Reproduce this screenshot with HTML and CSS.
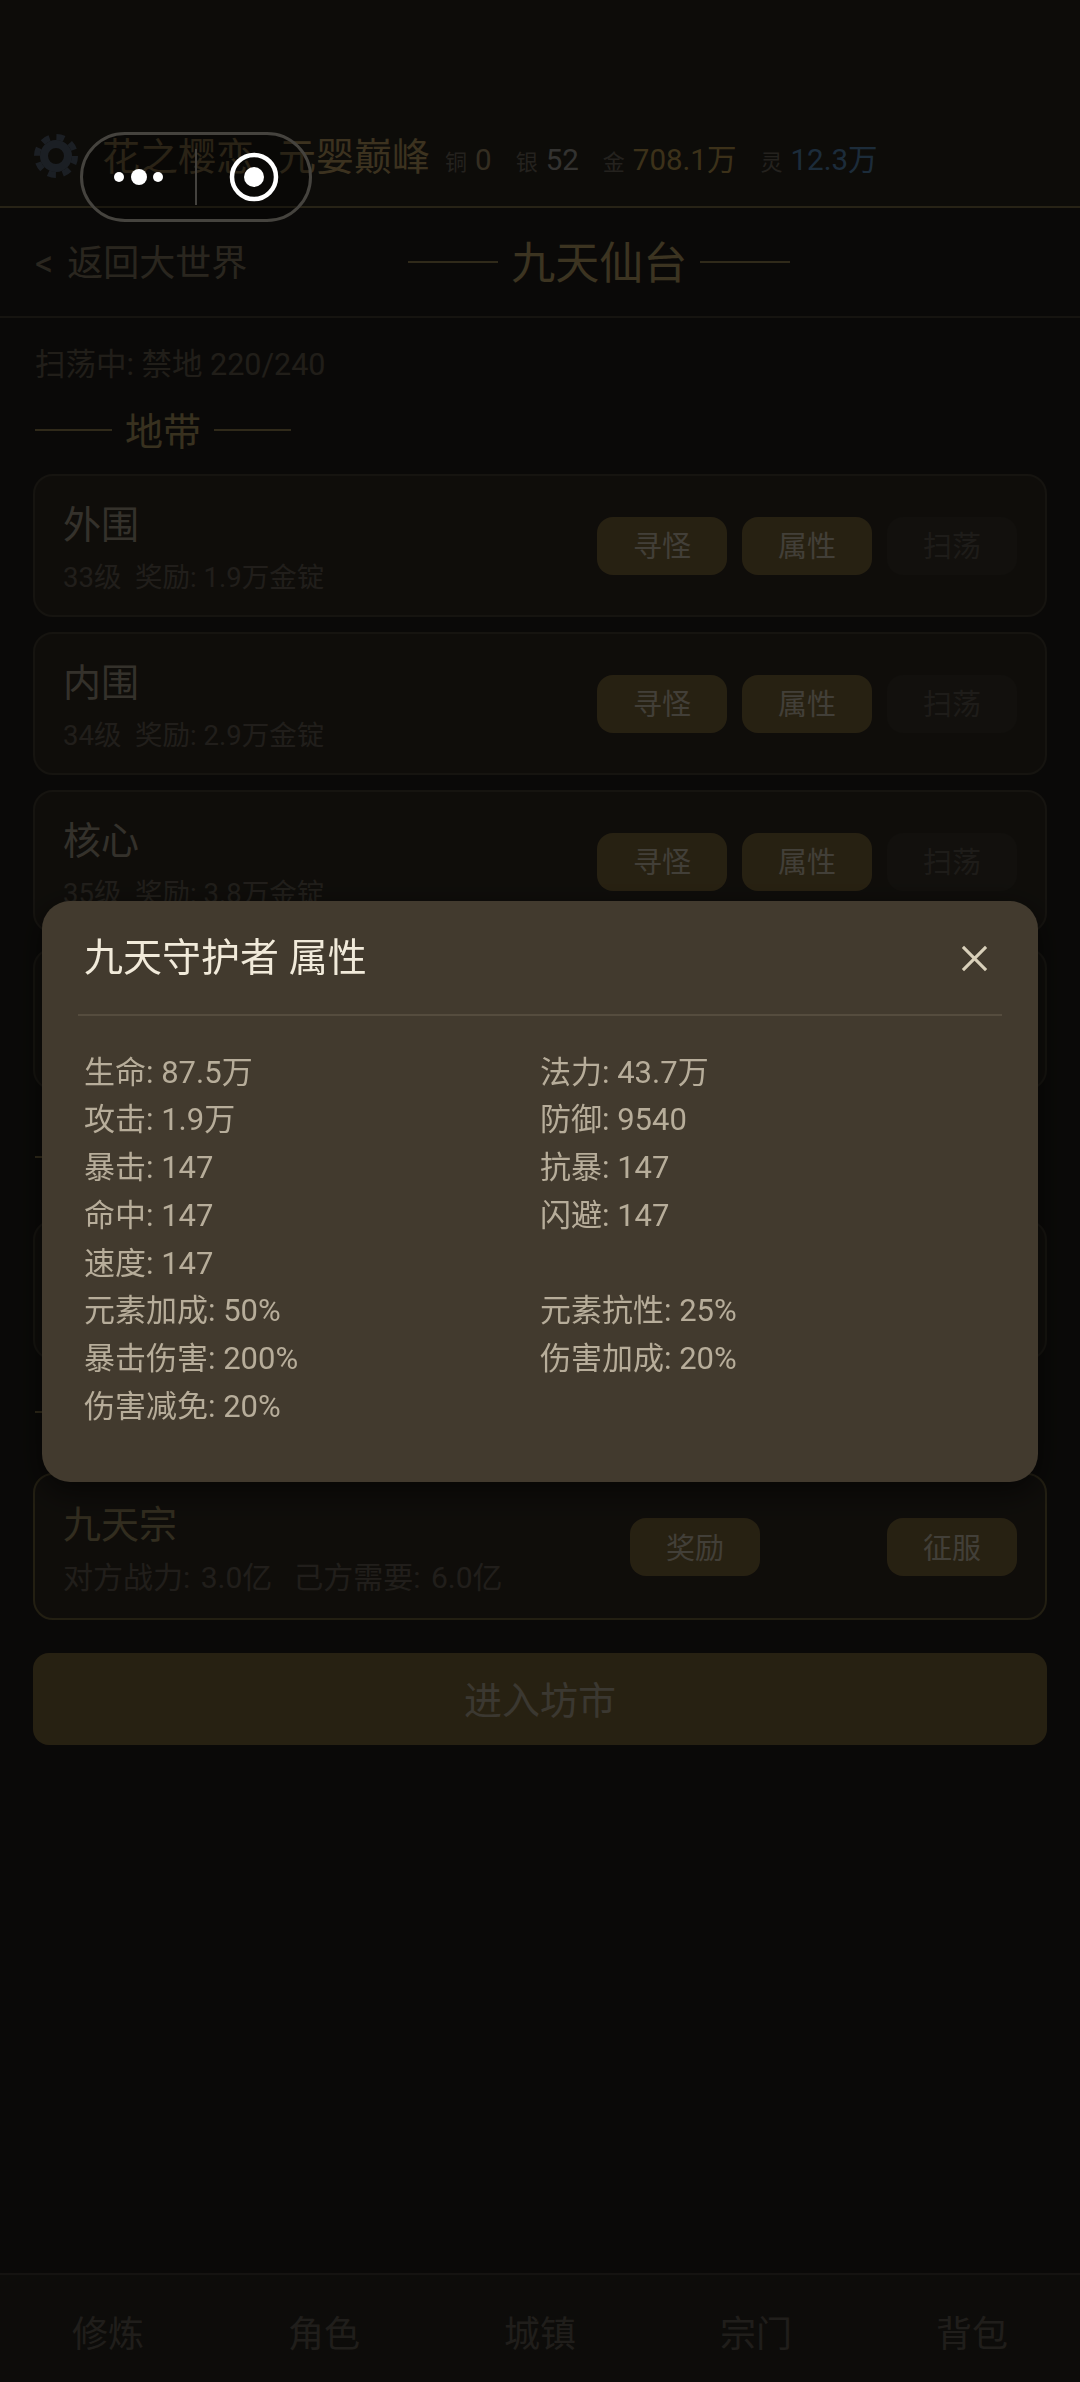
FILE: index.html
```html
<!DOCTYPE html>
<html lang="zh-CN">
  <head>
    <meta charset="UTF-8" />
    <meta name="viewport" content="width=device-width, initial-scale=1.0" />
    <title>九天仙台</title>
    <link rel="stylesheet" href="styles.css">
  </head>

  <body>
    <header class="topbar">
      <svg class="gear" viewBox="0 0 48 48">
        <circle cx="24" cy="24" r="12" fill="none" stroke="#5c6a7a" stroke-width="8" />
        <circle cx="24" cy="24" r="19" fill="none" stroke="#5c6a7a" stroke-width="6" stroke-dasharray="7.9 7" />
      </svg>
      <div class="hud">
        <span class="player">花之樱恋</span>
        <span class="player realm">元婴巅峰</span>
        <span class="res"><small>铜</small><b class="copper">0</b></span>
        <span class="res"><small>银</small><b class="silver">52</b></span>
        <span class="res"><small>金</small><b class="gold">708.1万</b></span>
        <span class="res"><small>灵</small><b class="spirit">12.3万</b></span>
      </div>
    </header>

    <div class="subbar">
      <span class="back">&lt; 返回大世界</span>
      <h1 class="place"><i></i><span>九天仙台</span><i></i></h1>
    </div>

    <main>
      <p class="status">扫荡中: 禁地 220/240</p>
      <h2 class="sect sect-zone"><i></i><span>地带</span><i></i></h2>

      <article class="card">
        <div class="info">
          <h3>外围</h3>
          <p>33级&nbsp;&nbsp;奖励: 1.9万金锭</p>
        </div>
        <div class="btns">
          <button>寻怪</button>
          <button>属性</button>
          <button class="off">扫荡</button>
        </div>
      </article>

      <article class="card">
        <div class="info">
          <h3>内围</h3>
          <p>34级&nbsp;&nbsp;奖励: 2.9万金锭</p>
        </div>
        <div class="btns">
          <button>寻怪</button>
          <button>属性</button>
          <button class="off">扫荡</button>
        </div>
      </article>

      <article class="card">
        <div class="info">
          <h3>核心</h3>
          <p>35级&nbsp;&nbsp;奖励: 3.8万金锭</p>
        </div>
        <div class="btns">
          <button>寻怪</button>
          <button>属性</button>
          <button class="off">扫荡</button>
        </div>
      </article>

      <!-- 这两块都被弹窗挡住了 -->
      <article class="card card-hidden"></article>
      <h2 class="sect sect-mid"><i></i></h2>
      <article class="card card-hidden2"></article>
      <h2 class="sect sect-low"><i></i></h2>

      <article class="card card-sect">
        <div class="info">
          <h3>九天宗</h3>
          <p>对方战力: 3.0亿&nbsp;&nbsp;己方需要: 6.0亿</p>
        </div>
        <div class="btns">
          <button class="reward">奖励</button>
          <button>征服</button>
        </div>
      </article>

      <button class="market">进入坊市</button>
    </main>

    <nav class="tabs">
      <span>修炼</span>
      <span>角色</span>
      <span>城镇</span>
      <span>宗门</span>
      <span>背包</span>
    </nav>

    <div class="overlay">
      <section class="modal">
        <div class="modal-head">
          <h2>九天守护者 属性</h2>
          <svg class="close" viewBox="0 0 28 28">
            <path d="M2 2 L26 26 M26 2 L2 26" stroke="#d9d0ba" stroke-width="3.2" fill="none" />
          </svg>
        </div>
        <div class="stats">
          <span>生命: 87.5万</span><span>法力: 43.7万</span>
          <span>攻击: 1.9万</span><span>防御: 9540</span>
          <span>暴击: 147</span><span>抗暴: 147</span>
          <span>命中: 147</span><span>闪避: 147</span>
          <span class="wide">速度: 147</span>
          <span>元素加成: 50%</span><span>元素抗性: 25%</span>
          <span>暴击伤害: 200%</span><span>伤害加成: 20%</span>
          <span class="wide">伤害减免: 20%</span>
        </div>
      </section>
    </div>

    <!-- 小程序胶囊 -->
    <div class="capsule">
      <span class="dots"><i></i><i class="big"></i><i></i></span>
      <span class="line"></span>
      <svg class="target" viewBox="0 0 52 52">
        <circle cx="26" cy="26" r="22" fill="none" stroke="#fff" stroke-width="4.5" />
        <circle cx="26" cy="26" r="10" fill="#fff" />
      </svg>
    </div>
  </body>
</html>
```

FILE: styles.css
```css
* {
  box-sizing: border-box;
}

html,
body {
  margin: 0;
  height: 100%;
}

body {
  display: flex;
  flex-direction: column;
  background-color: #24211c;
  color: #d8c8ae;
  font-family: Roboto, "Noto Sans CJK SC", sans-serif;
  overflow: hidden;
}

h1,
h2,
h3,
p {
  margin: 0;
  font-weight: normal;
}

/* top bar */
.topbar {
  height: 208px;
  padding: 105px 0 0 32px;
  display: flex;
  align-items: center;
  background-color: #2c2820;
  border-bottom: 2px solid #84754a;
}

.gear {
  width: 48px;
  height: 48px;
  margin-right: 22px;
}

.hud {
  display: flex;
  align-items: baseline;
  margin-bottom: 4px;
}

.player {
  font-size: 38px;
  color: #c9a86a;
  margin-right: 24px;
  white-space: nowrap;
}

.realm {
  margin-right: 15px;
}

.res {
  display: flex;
  align-items: baseline;
  gap: 8px;
  margin-right: 24px;
  white-space: nowrap;
}

.res small {
  font-size: 22px;
  color: #7a7264;
}

.res b {
  font-size: 29.5px;
  font-weight: normal;
}

.copper {
  color: #b09a70;
}

.silver {
  color: #aaa8a0;
}

.gold {
  color: #c8a656;
}

.spirit {
  color: #5f93c4;
}

.subbar {
  height: 110px;
  padding-left: 35px;
  display: flex;
  align-items: center;
  border-bottom: 2px solid #4a4436;
}

.back {
  margin-bottom: 4px;
  font-size: 36px;
  word-spacing: 5px;
  color: #8e8168;
  white-space: nowrap;
}

.place {
  margin-left: 161px;
  display: flex;
  align-items: center;
  gap: 13px;
  font-size: 44px;
  color: #c9ad70;
}

.place span,
.sect span {
  margin-bottom: 4px;
}

.place i,
.sect i {
  display: block;
  height: 2px;
  background-color: #a08c58;
}

.place i {
  width: 90px;
}

main {
  flex: 1;
  padding: 26px 33px 0;
}

.status {
  padding-left: 2px;
  font-size: 30.5px;
  line-height: 42px;
  color: #6f6656;
}

.sect {
  padding-left: 2px;
  height: 50px;
  display: flex;
  align-items: center;
  gap: 13px;
  font-size: 38px;
  color: #bca368;
}

.sect i {
  width: 77px;
}

.sect-zone {
  margin-top: 19px;
  margin-bottom: 19px;
}

.sect-mid {
  margin-top: 42px;
  margin-bottom: 38px;
}

.sect-low {
  margin-top: 27px;
  margin-bottom: 36px;
}

/* rows */
.card {
  height: 143px;
  margin-bottom: 15px;
  padding: 21px 28px;
  display: flex;
  align-items: center;
  justify-content: space-between;
  background-color: #332d24;
  border: 2px solid #4a4336;
  border-radius: 20px;
}

.card-hidden {
  height: 142px;
}

.card-hidden2 {
  height: 140px;
  margin-bottom: 0;
}

.card-sect {
  height: 147px;
  margin-bottom: 33px;
  border-color: #75683f;
  align-items: flex-start;
}

.info {
  margin-top: 3px;
}

.info h3 {
  font-size: 38px;
  line-height: 52px;
  color: #b0a591;
}

.info p {
  margin-top: 9px;
  font-size: 27.5px;
  line-height: 36px;
  color: #6f675a;
  white-space: nowrap;
}

.card-sect .info h3 {
  color: #a89668;
}

.card-sect .info p {
  font-size: 30px;
  word-spacing: 3px;
}

.btns {
  display: flex;
  gap: 15px;
}

button {
  font-family: inherit;
}

.btns button {
  width: 130px;
  height: 58px;
  padding: 0 0 3px;
  border: none;
  border-radius: 16px;
  background-color: #846e3c;
  color: #ddd2bb;
  font-size: 29px;
}

.btns button.off {
  background-color: #3c362c;
  color: #655f55;
}

.btns .reward {
  margin-right: 112px;
}

.card-sect .btns {
  margin-top: 22px;
}

.market {
  display: block;
  width: 100%;
  height: 92px;
  padding: 0 0 4px;
  border: none;
  border-radius: 16px;
  background-color: #846e3c;
  color: #c6bca6;
  font-size: 38px;
}

.tabs {
  height: 109px;
  padding-top: 4px;
  display: flex;
  align-items: center;
  justify-content: space-around;
  background-color: #2e2a22;
  border-top: 2px solid #46413a;
  font-size: 36px;
  color: #6d655b;
}

/* popup */
.overlay {
  position: fixed;
  inset: 0;
  display: flex;
  align-items: center;
  justify-content: center;
  background-color: rgba(0, 0, 0, 0.7);
}

.modal {
  width: 996px;
  height: 581px;
  padding: 32px 36px 0;
  background-color: #423a2e;
  border-radius: 28px;
  box-shadow: 0 10px 30px rgba(0, 0, 0, 0.55);
}

.modal-head {
  height: 83px;
  padding: 0 14px 33px 6px;
  display: flex;
  align-items: center;
  justify-content: space-between;
  border-bottom: 2px solid #554c3e;
}

.modal-head h2 {
  margin-top: 2px;
  font-size: 39px;
  line-height: 50px;
  color: #f1eada;
}

.close {
  width: 27px;
  height: 27px;
  margin-top: 3px;
}

.stats {
  margin-top: 33px;
  padding-left: 6px;
  display: grid;
  grid-template-columns: 456px 1fr;
  font-size: 31px;
  line-height: 47.75px;
  color: #b7ad9a;
}

.wide {
  grid-column: 1 / -1;
}

/* wechat capsule */
.capsule {
  position: fixed;
  left: 80px;
  top: 132px;
  width: 232px;
  height: 90px;
  display: flex;
  align-items: center;
  background-color: rgba(0, 0, 0, 0.3);
  border: 3px solid #45433e;
  border-radius: 45px;
}

.dots {
  margin-left: 31px;
  width: 49px;
  display: flex;
  align-items: center;
  justify-content: space-between;
}

.dots i {
  width: 10px;
  height: 10px;
  border-radius: 50%;
  background-color: #fff;
}

.dots i.big {
  width: 16px;
  height: 16px;
}

.line {
  width: 2px;
  height: 56px;
  margin-left: 32px;
  background-color: #44423e;
}

.target {
  width: 52px;
  height: 52px;
  margin-left: 31px;
}
```
